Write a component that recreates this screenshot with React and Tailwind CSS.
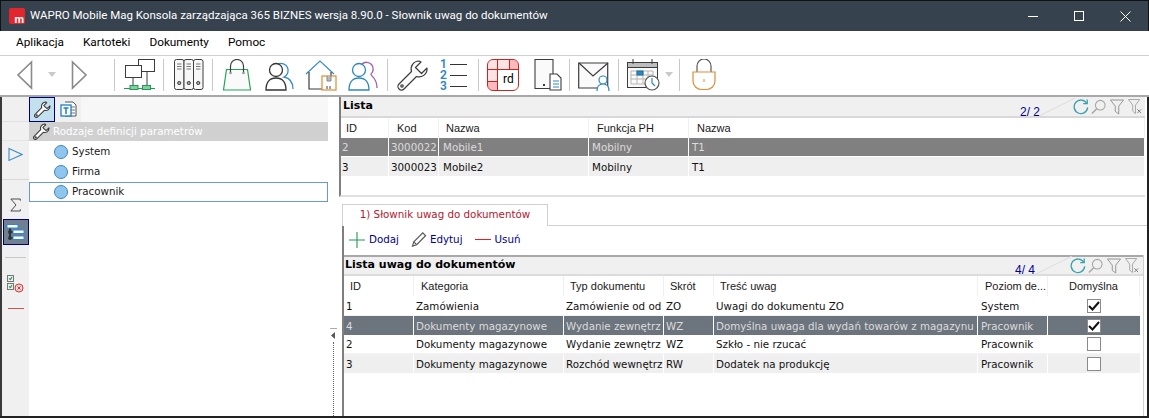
import React from "react";

const CELL = { fontFamily: '"DejaVu Sans", sans-serif', fontSize: "10.3px" };
const HEAD = { fontFamily: '"Liberation Sans", Arial, sans-serif', fontSize: "11px" };
const BOLD = { fontFamily: '"DejaVu Sans", sans-serif', fontSize: "11px" };

const Sep = ({ ml }) => <div className="w-px h-[32px] bg-[#c8c8c8] shrink-0" style={{ marginLeft: ml }} />;
const At = ({ ml, children }) => <div className="shrink-0 flex" style={{ marginLeft: ml }}>{children}</div>;

function Arrow({ dir = "l", color = "#8a8a8a" }) {
  return (
    <svg width="18" height="30" viewBox="0 0 18 30" fill="none" stroke={color} strokeWidth="1.6">
      {dir === "l" ? <path d="M15.5 2 L2 15 L15.5 28 Z" /> : <path d="M2.5 2 L16 15 L2.5 28 Z" />}
    </svg>
  );
}
const Caret = () => (
  <svg width="10" height="8" viewBox="0 0 10 8"><path d="M1 1h8L5 6z" fill="#c9c9c9" /></svg>
);
const Network = () => (
  <svg width="32" height="32" viewBox="0 0 32 32" fill="#fff" stroke="#3c3c3c" strokeWidth="1">
    <rect x="14.5" y="0.5" width="16" height="12" />
    <rect x="1.5" y="6.5" width="16" height="12" />
    <path d="M9 19v8M23 13v14" />
    <path d="M0 29.5h31" stroke="#229a55" />
    <rect x="6" y="26.5" width="8" height="4" fill="#7fd09b" stroke="#229a55" />
    <rect x="18.5" y="26.5" width="8" height="4" fill="#7fd09b" stroke="#229a55" />
  </svg>
);
const Binders = () => (
  <svg width="30" height="32" viewBox="0 0 30 32" fill="#f7f7f7" stroke="#3c3c3c" strokeWidth="1">
    {[0.5, 10, 19.5].map((x) => (
      <g key={x}>
        <rect x={x} y="0.5" width="9.5" height="30" rx="2" />
        <path d={`M${x + 2.5} 5h4.5M${x + 2.5} 7.5h4.5M${x + 2.5} 10h4.5`} stroke="#777" />
        <circle cx={x + 4.75} cy="24" r="1.6" fill="#aaa" />
      </g>
    ))}
  </svg>
);
const Bag = () => (
  <svg width="28" height="32" viewBox="0 0 28 32" fill="none">
    <path d="M3.5 10.5h21l3 20.5H.5z" stroke="#22a35a" strokeWidth="1.2" fill="#fafafa" />
    <path d="M7.500 14V7a6.500 6.500 0 0 1 13 0v7" stroke="#3c3c3c" strokeWidth="1.200" />
    <circle cx="7.500" cy="14" r="1.300" fill="#999" />
    <circle cx="20.500" cy="14" r="1.300" fill="#999" />
  </svg>
);
const Person = ({ color = "#333", x = 0, y = 0 }) => (
  <g transform={`translate(${x} ${y})`} stroke={color} strokeWidth="1.3" fill="#fff">
    <circle cx="11" cy="9" r="6.500" />
    <path d="M1 29c0-8 4-12 10-12s10 4 10 12z" />
  </g>
);
const Users = () => (
  <svg width="30" height="32" viewBox="0 0 30 32">
    <path d="M13 5a7 7 0 1 1 6 13c5 1 9 5 9 12" fill="none" stroke="#3a8cc0" strokeWidth="1.300" />
    <Person x={0} y={2} />
  </svg>
);
const HouseBox = () => (
  <svg width="32" height="32" viewBox="0 0 32 32" fill="none">
    <path d="M1 15 15 2l14 13" stroke="#3a8cc0" strokeWidth="1.200" />
    <path d="M4 13v17h13M26 13v4" stroke="#3c3c3c" strokeWidth="1.200" />
    <rect x="17" y="17" width="14" height="14" fill="#fff" stroke="#e08a32" strokeWidth="1.200" />
    <path d="M22 17v5h4v-5" fill="#bbb" stroke="#888" />
    <path d="M22 27v3M25 27v3" stroke="#444" />
  </svg>
);
const Users2 = () => (
  <svg width="30" height="32" viewBox="0 0 30 32">
    <path d="M14 5a6 6 0 1 1 9 10c-1 2 6 3 6 14" fill="none" stroke="#9b5fa8" strokeWidth="1.300" />
    <Person color="#2f87c0" x={0} y={2} />
  </svg>
);
const Wrench = ({ w = 32, h = 32, color = "#3c3c3c", sw = 1.2 }) => (
  <svg width={w} height={h} viewBox="0 0 32 32" fill="#fafafa" stroke={color} strokeWidth={sw} strokeLinejoin="round">
    <path d="M22 2a8 8 0 0 0-7.500 10.500L2 25a3.500 3.500 0 0 0 5 5l12.500-12.500A8 8 0 0 0 30 9l-5.500 5.500-6-6L24 3a8 8 0 0 0-2-1z" />
    <circle cx="5" cy="27" r="1.200" />
  </svg>
);
const NumList = () => (
  <div className="flex flex-col w-[27px] h-[32px] justify-between">
    {["1", "2", "3"].map((n) => (
      <div key={n} className="flex items-center h-[10px] gap-[3px]">
        <span className="text-[#2f87c0] text-[12px] font-semibold leading-[10px] w-[8px]" style={{ fontFamily: "Roboto, sans-serif" }}>{n}</span>
        <div className="h-px w-[18px] bg-[#333]" />
      </div>
    ))}
  </div>
);
const RdCal = () => (
  <div className="relative w-[32px] h-[32px] rounded-[6px] border border-[#cc2222] overflow-hidden bg-white">
    <div className="grid grid-cols-[9px_11px_10px] grid-rows-[9px_11px_10px] gap-px bg-[#cc2222] w-full h-full">
      <div className="bg-[#fde3e3]" /><div className="bg-[#fde3e3]" /><div className="bg-[#fbb]" />
      <div className="bg-[#fde3e3]" /><div className="bg-white col-span-2 row-span-2" />
      <div className="bg-[#fbb]" />
    </div>
    <span className="absolute left-[15px] top-[12px] text-[12px] leading-[14px] text-black" style={{ fontFamily: "Roboto, sans-serif" }}>rd</span>
  </div>
);
const DocDoc = () => (
  <svg width="28" height="32" viewBox="0 0 28 32" fill="#fafafa" stroke="#3c3c3c" strokeWidth="1.100">
    <path d="M1 .5h18v29H1z" />
    <path d="M9 26h2" strokeWidth="2" />
    <path d="M16 15h7l4 4v12H16z" fill="#fff" />
    <path d="M19 22h6M19 25h6M19 28h6" stroke="#2f87c0" />
  </svg>
);
const MailUser = () => (
  <svg width="32" height="32" viewBox="0 0 32 32" fill="none">
    <path d="M.7 4h29v25H.7z" fill="#fafafa" stroke="#3c3c3c" strokeWidth="1.200" />
    <path d="M1 4l14 13L30 4" stroke="#3c3c3c" strokeWidth="1.200" />
    <circle cx="25" cy="21" r="4" fill="#fff" stroke="#2f87c0" strokeWidth="1.200" />
    <path d="M19 32c0-5 2-7 6-7s6 2 6 7" fill="#fff" stroke="#2f87c0" strokeWidth="1.200" />
  </svg>
);
const CalClock = () => (
  <svg width="33" height="32" viewBox="0 0 33 32" fill="#fafafa" stroke="#3c3c3c" strokeWidth="1">
    <rect x="0.500" y="3.500" width="30" height="25" />
    <rect x="0.500" y="3.500" width="30" height="5" fill="#bdbdbd" />
    <path d="M6 0v5M25 0v5" />
    <path d="M4 12h22v13H4zM10 12v13M16 12v13M21 12v13M4 16h22M4 20h22" stroke="#b5b5b5" fill="none" />
    <rect x="10" y="12" width="6" height="4" fill="#2f87c0" stroke="#1b6ca0" />
    <circle cx="25" cy="24" r="7" fill="#fff" stroke="#555" strokeWidth="1.200" />
    <path d="M25 19v5l3 3" stroke="#2f87c0" strokeWidth="1.200" fill="none" />
  </svg>
);
const Lock = () => (
  <svg width="24" height="32" viewBox="0 0 24 32" fill="none">
    <path d="M5 13V7a7 7 0 0 1 14 0v6" stroke="#4a4a4a" strokeWidth="1.100" />
    <path d="M1 13h22v9a8.500 8.500 0 0 1-8.500 8.500h-5A8.500 8.500 0 0 1 1 22z" fill="#fff" stroke="#e08a32" strokeWidth="1.200" />
    <path d="M12 20v3" stroke="#e08a32" />
  </svg>
);
const Circle = () => (
  <span className="w-[14px] h-[14px] rounded-full bg-[#8fc6ee] border border-[#3c86bd] shrink-0" />
);

function ListTools({ count, mr, countRight }) {
  return (
    <div className="relative flex items-center h-full" style={{ marginRight: mr }}>
      <span
        className="absolute bottom-[-3px] leading-[14px] text-[12px] text-[#000090] whitespace-nowrap"
        style={{ right: countRight, fontFamily: '"Liberation Sans", sans-serif' }}
      >
        {count}
      </span>
      <svg className="absolute right-[68px] bottom-0" width="36" height="18" viewBox="0 0 36 18" fill="none"><path d="M0 18 36 0" stroke="#dcdcdc" /></svg>
      <svg width="16" height="17" viewBox="0 0 18 18" fill="none" stroke="#3ba2ad" strokeWidth="1.500">
        <path d="M15.500 5.500A7.600 7.600 0 1 0 16.500 10" />
        <path d="M11.500 5.700h4.500V1.200" />
      </svg>
      <svg className="ml-[2px]" width="15" height="16" viewBox="0 0 17 17" fill="none" stroke="#a5a5a5" strokeWidth="1.200">
        <circle cx="10.500" cy="6.500" r="5.500" />
        <path d="M6.500 10.500 1 16" strokeWidth="1.600" />
      </svg>
      <svg className="ml-[4px]" width="14" height="16" viewBox="0 0 16 17" fill="none" stroke="#8a8a8a" strokeWidth="1">
        <path d="M.5.5h15l-5.500 7v9l-4-3v-6z" />
      </svg>
      <svg className="ml-[4px]" width="15" height="16" viewBox="0 0 16 17" fill="none" stroke="#a5a5a5" strokeWidth="1">
        <path d="M.5.5h12l-4.500 6v9l-3-2.500v-6.500z" />
        <path d="M10 11l4 4M14 11l-4 4" stroke="#777" />
      </svg>
    </div>
  );
}

const HCell = ({ w, pl, children, center }) => (
  <div
    className={`shrink-0 h-full bg-white border-r border-[#f0f0f0] flex items-center whitespace-nowrap overflow-hidden ${center ? "justify-center" : ""}`}
    style={{ width: w, paddingLeft: pl }}
  >
    {children}
  </div>
);
const RCell = ({ w, pl = 2, children, line = "border-white" }) => (
  <div
    className={`shrink-0 h-full border-r pt-[2px] ${line} flex items-center whitespace-nowrap overflow-hidden`}
    style={{ width: w, paddingLeft: pl }}
  >
    {children}
  </div>
);

function Check({ on }) {
  return (
    <span className="w-[14px] h-[14px] border border-[#8a8a8a] bg-white flex items-center justify-center">
      {on && (
        <svg width="12" height="10" viewBox="0 0 12 10" fill="none"><path d="M1 5l3.500 3.500L11 1" stroke="#111" strokeWidth="2" /></svg>
      )}
    </span>
  );
}

const top = [
  ["2", "3000022", "Mobile1", "Mobilny", "T1"],
  ["3", "3000023", "Mobile2", "Mobilny", "T1"],
];
const topW = [48, 50, 150, 100, 456];
const topHead = ["ID", "Kod", "Nazwa", "Funkcja PH", "Nazwa"];
const topPl = [5, 8, 7, 8, 8];
const topRowPl = [1, 2, 4, 3, 3];

const botW = [70, 150, 100, 50, 264, 70, 92];
const botHead = ["ID", "Kategoria", "Typ dokumentu", "Skrót", "Treść uwag", "Poziom de...", "Domyślna"];
const botPl = [6, 7, 6, 6, 6, 7, 0];
const bot = [
  ["1", "Zamówienia", "Zamówienie od od", "ZO", "Uwagi do dokumentu ZO", "System", true],
  ["4", "Dokumenty magazynowe", "Wydanie zewnętrz", "WZ", "Domyślna uwaga dla wydań towarów z magazynu", "Pracownik", true],
  ["2", "Dokumenty magazynowe", "Wydanie zewnętrz", "WZ", "Szkło - nie rzucać", "Pracownik", false],
  ["3", "Dokumenty magazynowe", "Rozchód wewnętrz", "RW", "Dodatek na produkcję", "Pracownik", false],
];

export default function App() {
  return (
    <div className="w-[1149px] h-[418px] overflow-hidden bg-white border-b-2 border-[#222] flex flex-col text-black">
      {/* title bar */}
      <div className="h-[31px] shrink-0 bg-[#37424f] border-t border-x border-[#111] flex items-center text-white" style={{ fontFamily: "Roboto, sans-serif" }}>
        <div className="ml-[8px] w-[16px] h-[16px] rounded-[2px] bg-[#e3262e] relative mr-[5px]">
          <span className="absolute right-[1px] bottom-[-2px] text-[11px] font-bold leading-[13px]">m</span>
        </div>
        <span className="text-[11.5px] whitespace-nowrap">WAPRO Mobile Mag Konsola zarządzająca 365 BIZNES wersja 8.90.0 - Słownik uwag do dokumentów</span>
        <div className="ml-auto flex items-center">
          <div className="w-[46px] flex justify-center"><div className="w-[10px] h-px bg-white" /></div>
          <div className="w-[46px] flex justify-center"><div className="w-[10px] h-[10px] border border-white" /></div>
          <div className="w-[46px] flex justify-center">
            <svg width="11" height="11" viewBox="0 0 11 11" stroke="#fff"><path d="M.5.5l10 10M10.500.5l-10 10" /></svg>
          </div>
        </div>
      </div>
      {/* menu */}
      <div className="h-[25px] shrink-0 flex items-center pl-[16px] gap-[19px] border-b border-[#d0d0d0] text-[11.8px]" style={{ fontFamily: "Roboto, sans-serif" }}>
        <span>Aplikacja</span><span>Kartoteki</span><span>Dokumenty</span><span>Pomoc</span>
      </div>
      {/* toolbar */}
      <div className="h-[41px] shrink-0 flex items-center pl-[16px] pb-[1px] border-b-2 border-[#a8a8a8]">
        <Arrow dir="l" />
        <div className="w-[36px] flex justify-center"><Caret /></div>
        <Arrow dir="r" />
        <Sep ml={26} />
        <At ml={9}><Network /></At><Sep ml={7} />
        <At ml={10}><Binders /></At><Sep ml={8} />
        <At ml={10}><Bag /></At>
        <At ml={14}><Users /></At>
        <At ml={10}><HouseBox /></At>
        <At ml={11}><Users2 /></At><Sep ml={9} />
        <At ml={9}><Wrench /></At>
        <At ml={11}><NumList /></At><Sep ml={11} />
        <At ml={8}><RdCal /></At>
        <At ml={15}><DocDoc /></At><Sep ml={7} />
        <At ml={8}><MailUser /></At><Sep ml={8} />
        <At ml={8}><CalClock /></At>
        <At ml={4}><Caret /></At><Sep ml={5} />
        <At ml={12}><Lock /></At>
      </div>
      {/* main */}
      <div className="flex-1 min-h-0 flex border-l-2 border-r-2 border-l-[#3a3a3a] border-r-[#222]">
        {/* rail */}
        <div className="w-[27px] shrink-0 bg-[#f0f0f0] flex flex-col items-center">
          <div className="h-[25px] w-full border-b border-[#e0e0e0] shrink-0" />
          <div className="h-[19px] w-full border-b border-[#e4e4e4] shrink-0" />
          <div className="h-[39px] w-full shrink-0 pt-[6px] flex justify-center items-start border-b border-[#d8d8d8]">
            <svg width="15" height="15" viewBox="0 0 15 15" fill="none" stroke="#3b8dc6" strokeWidth="1.100"><path d="M1 1.500 14 7.500 1 13.500z" /></svg>
          </div>
          <div className="mt-[17px] h-[16px] flex justify-center shrink-0">
            <svg width="12" height="16" viewBox="0 0 14 16" fill="none" stroke="#444" strokeWidth="1.100"><path d="M12 3V1H1l6 7-6 7h11v-2" /></svg>
          </div>
          <div className="mt-[6px] w-[26px] h-[26px] shrink-0 bg-[#708090] border-[1.500px] border-[#00007a] flex items-center justify-center">
            <svg width="19" height="17" viewBox="0 0 19 17">
              <path d="M4 3v12M4 8h4M4 14h4" stroke="#333" strokeWidth="2" />
              <circle cx="4" cy="8" r="2" fill="#333" />
              <circle cx="4" cy="14" r="2" fill="#333" />
              <rect x="1" y="0.500" width="11" height="3.500" fill="#fff" stroke="#2f87dd" />
              <rect x="7" y="6" width="11" height="3.500" fill="#fff" stroke="#2f87dd" />
              <rect x="7" y="12" width="11" height="3.500" fill="#fff" stroke="#2f87dd" />
            </svg>
          </div>
          <div className="mt-[12px] h-px w-[21px] bg-[#c8c8c8] shrink-0" />
          <div className="mt-[17px] shrink-0">
            <svg width="17" height="18" viewBox="0 0 17 18" fill="none">
              <rect x="0.500" y="0.500" width="6" height="6" fill="#eee" stroke="#777" />
              <path d="M2 3.500l1.500 1L5 2" stroke="#2a9a55" strokeWidth="1.200" />
              <rect x="0.500" y="8.500" width="6" height="6" fill="#eee" stroke="#777" />
              <path d="M2 11.500l1.500 1L5 10" stroke="#2a9a55" strokeWidth="1.200" />
              <circle cx="12" cy="13" r="4" fill="#fde0e0" stroke="#e03030" />
              <path d="M10.500 11.500l3 3M13.500 11.500l-3 3" stroke="#e03030" />
            </svg>
          </div>
          <div className="mt-[15px] h-px w-[16px] bg-[#d85050] shrink-0" />
        </div>
        {/* left panel */}
        <div className="w-[299px] shrink-0 flex flex-col" style={CELL}>
          <div className="h-[25px] shrink-0 bg-[#f7f7f7] flex items-start">
            <div className="w-[26px] h-[25px] bg-[#c2e0ee] border border-[#00007a] flex items-center justify-center">
              <Wrench w={17} h={17} sw={2} />
            </div>
            <div className="w-[26px] h-[25px] bg-[#f0f0f0] flex items-center justify-center">
              <svg width="17" height="17" viewBox="0 0 17 17" fill="none">
                <path d="M5 1h8l3 3v11H5" stroke="#555" fill="#fff" />
                <path d="M11 6h4M11 9h4M11 12h4" stroke="#777" />
                <rect x="1" y="4" width="10" height="11" fill="#fff" stroke="#1d7fc4" strokeWidth="1.300" />
                <path d="M3.500 7h5M6 7v6" stroke="#1d7fc4" strokeWidth="1.500" />
              </svg>
            </div>
          </div>
          <div className="h-[19px] shrink-0 bg-[#d0d0d0] flex items-center pl-[4px] gap-[3px] text-white">
            <Wrench w={17} h={17} sw={2} />
            <span>Rodzaje definicji parametrów</span>
          </div>
          <div className="h-[1px] shrink-0" />
          {["System", "Firma"].map((t) => (
            <div key={t} className="h-[20px] shrink-0 flex items-center pl-[24px] gap-[4px] border border-transparent text-[#1a1a1a]">
              <Circle /><span>{t}</span>
            </div>
          ))}
          <div className="h-[20px] shrink-0 flex items-center pl-[24px] gap-[4px] border border-[#6d97d8] text-[#1a1a1a]">
            <Circle /><span>Pracownik</span>
          </div>
        </div>
        {/* splitter */}
        <div className="w-[11px] shrink-0 bg-white flex flex-col items-center">
          <div className="mt-[231px] w-[7px] h-px bg-[#aaa] shrink-0" />
          <svg className="mt-[3px] shrink-0" width="5" height="7" viewBox="0 0 5 7"><path d="M4 0v7L0 3.500z" fill="#555" /></svg>
          <div className="mt-[3px] flex-1 border-l border-dotted border-[#666]" />
        </div>
        {/* right */}
        <div className="flex-1 min-w-0 flex flex-col">
          {/* Lista */}
          <div className="h-[100px] shrink-0 border-l-2 border-[#7f7f7f] border-b-2 border-b-[#e0e0e0] mr-[2px] flex flex-col" style={CELL}>
            <div className="h-[21px] shrink-0 bg-[#f0f0f0] border-b-2 border-[#d8d8d8] flex items-center justify-between pl-[2px]">
              <span className="font-bold" style={BOLD}>Lista</span>
              <ListTools count="2/ 2" mr={2} countRight={103} />
            </div>
            <div className="h-[20px] shrink-0 flex items-center text-[#1a1a1a]" style={HEAD}>
              {topHead.map((h, i) => (
                <HCell key={i} w={topW[i]} pl={topPl[i]}>{h}</HCell>
              ))}
            </div>
            <div className="h-[18px] shrink-0 mb-px bg-[#808080] flex items-center text-[#dcdcdc]">
              {top[0].map((c, i) => (
                <RCell key={i} w={topW[i]} pl={topRowPl[i]}>{c}</RCell>
              ))}
            </div>
            <div className="h-[19px] shrink-0 bg-[#efefef] flex items-center text-[#111]">
              {top[1].map((c, i) => (
                <RCell key={i} w={topW[i]} pl={topRowPl[i]}>{c}</RCell>
              ))}
            </div>
          </div>
          {/* Tab */}
          <div className="h-[22px] mt-[7px] shrink-0 flex items-end" style={CELL}>
            <div className="ml-[3px] w-[206px] h-[22px] shrink-0 border border-b-0 border-[#d0d0d0] text-[#b0182f] text-center leading-[19px]">
              1) Słownik uwag do dokumentów
            </div>
            <div className="flex-1 border-b border-[#d0d0d0]" />
          </div>
          <div className="h-[29px] shrink-0 pb-[2px] border-l-2 border-[#7f7f7f] ml-[3px] flex items-center pl-[5px] text-[#00008b]" style={CELL}>
            <svg width="16" height="16" viewBox="0 0 16 16" stroke="#229a55" strokeWidth="1.100"><path d="M8 0v16M0 8h16" /></svg>
            <span className="ml-[4px]">Dodaj</span>
            <svg className="ml-[12px]" width="16" height="17" viewBox="0 0 17 17" fill="#fff" stroke="#555" strokeWidth="1.200"><path d="M1.500 15.500 3 11 12.500 1.500l3 3L6 14z" /><path d="M3 11l3 3" /></svg>
            <span className="ml-[3px]">Edytuj</span>
            <div className="ml-[12px] w-[16px] h-px bg-[#e02020]" />
            <span className="ml-[4px]">Usuń</span>
          </div>
          {/* Bottom list */}
          <div className="flex-1 min-h-0 border-l-2 border-[#7f7f7f] ml-[3px] flex flex-col border-r border-r-[#d0d0d0] mr-[3px]" style={CELL}>
            <div className="h-[21px] shrink-0 bg-[#f0f0f0] border-t-2 border-b-2 border-t-[#a8a8a8] border-b-[#dcdcdc] flex items-center justify-between pl-[1px]">
              <span className="font-bold" style={BOLD}>Lista uwag do dokumentów</span>
              <ListTools count="4/ 4" mr={3} countRight={105} />
            </div>
            <div className="h-[21px] shrink-0 pb-px flex items-center text-[#1a1a1a]" style={HEAD}>
              {botHead.map((h, i) => (
                <HCell key={i} w={botW[i]} pl={botPl[i]} center={i === 6}>{h}</HCell>
              ))}
            </div>
            {bot.map((r, ri) => {
              const sel = ri === 1;
              const bg = sel ? "bg-[#6c747d] text-[#dcdcdc]" : ri === 3 ? "bg-[#efefef] text-[#111]" : "text-[#111] border-b border-[#f4f4f4]";
              return (
                <div key={ri} className={`h-[19px] shrink-0 flex items-center w-[796px] ${bg}`}>
                  {r.slice(0, 6).map((c, i) => (
                    <RCell key={i} w={botW[i]} pl={i === 5 ? 3 : 2}>{c}</RCell>
                  ))}
                  <div className="flex justify-center items-center" style={{ width: botW[6] }}>
                    <Check on={r[6]} />
                  </div>
                </div>
              );
            })}
          </div>
        </div>
      </div>
    </div>
  );
}
